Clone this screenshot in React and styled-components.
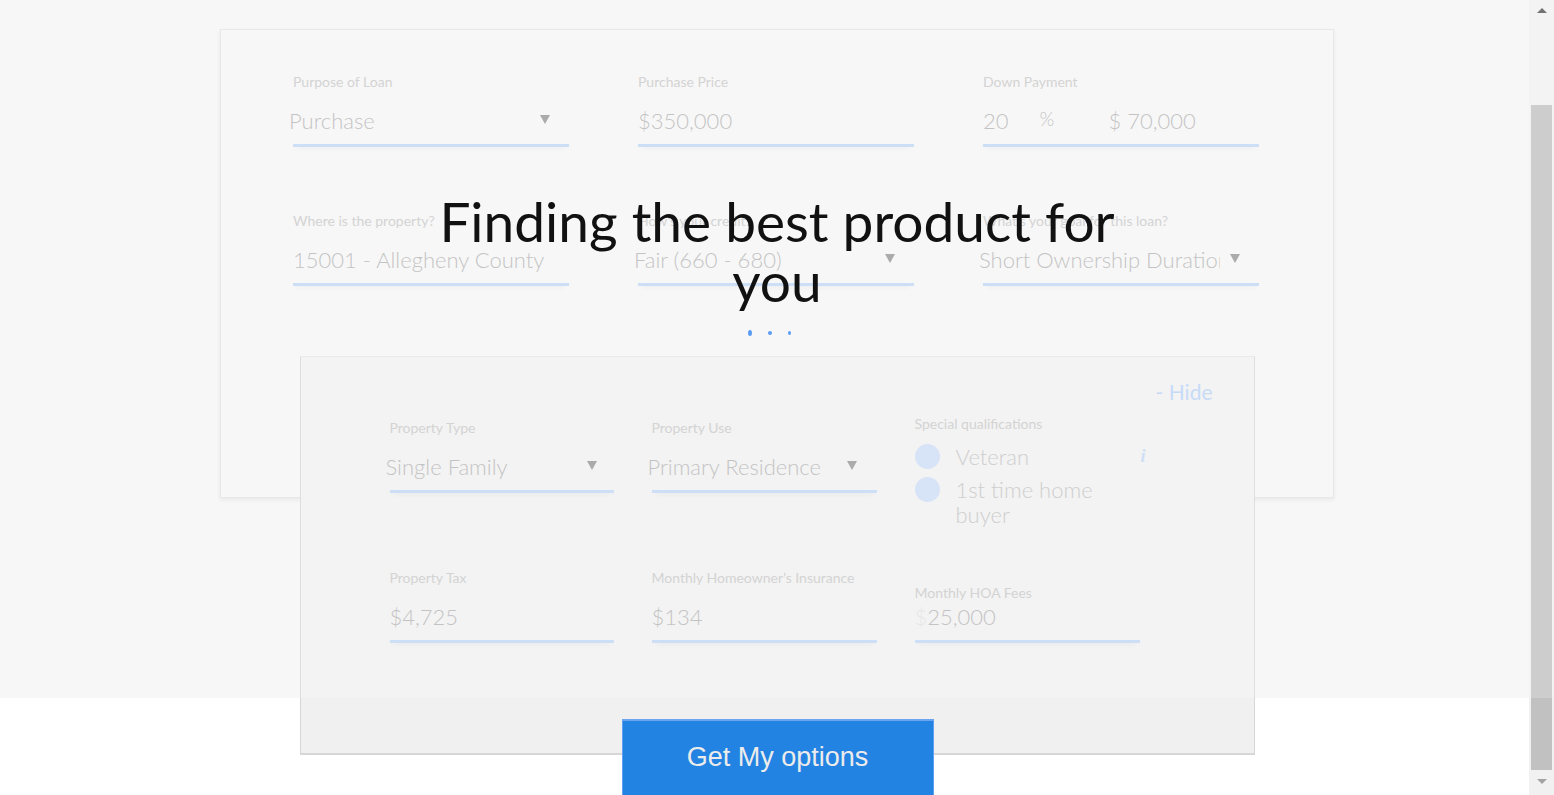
import styled, { createGlobalStyle } from 'styled-components';

const GlobalStyle = createGlobalStyle`
  html, body {
    margin: 0;
    padding: 0;
    background: #ffffff;
    overflow: hidden;
    font-family: Lato, "Open Sans", sans-serif;
  }
  * {
    box-sizing: border-box;
  }
`;

const cardRows = [
  [
    { label: 'Purpose of Loan', value: 'Purchase', select: true },
    { label: 'Purchase Price', value: '$350,000' },
    { label: 'Down Payment', down: true },
  ],
  [
    { label: 'Where is the property?', value: '15001 - Allegheny County' },
    { label: 'How\u2019s your credit?', value: 'Fair (660 - 680)', select: true },
    { label: 'What\u2019s your goal for this loan?', value: 'Short Ownership Duration', select: true },
  ],
];

const Field = ({ label, value, select, down }) => (
  <FieldBox>
    <Label>{label}</Label>
    <Control>
      {down ? (
        <>
          <Value $grow={false}>20</Value>
          <Percent>%</Percent>
          <Value>$ 70,000</Value>
        </>
      ) : (
        <Value $shift={select}>{value}</Value>
      )}
      {select && <Arrow />}
    </Control>
  </FieldBox>
);

const App = () => {
  return (
    <>
      <GlobalStyle />
      <Page>
        <Hero>
          <Card>
            {cardRows.map((row, i) => (
              <CardRow key={i}>
                {row.map(f => (
                  <Field key={f.label} {...f} />
                ))}
              </CardRow>
            ))}
          </Card>

          <Panel>
            <HideRow>
              <HideLink>- Hide</HideLink>
            </HideRow>
            <PanelGrid>
              <FieldBox $nudge>
                <Label>Property Type</Label>
                <Control>
                  <Value $shift>Single Family</Value>
                  <Arrow $gap={17} />
                </Control>
              </FieldBox>
              <FieldBox $nudge>
                <Label>Property Use</Label>
                <Control>
                  <Value $shift>Primary Residence</Value>
                  <Arrow $gap={20} />
                </Control>
              </FieldBox>
              <FieldBox>
                <Label>Special qualifications</Label>
                <Checks>
                  <CheckRow>
                    <Circle />
                    <CheckText>Veteran</CheckText>
                    <Info>i</Info>
                  </CheckRow>
                  <CheckRow>
                    <Circle />
                    <CheckText>1st time home buyer</CheckText>
                  </CheckRow>
                </Checks>
              </FieldBox>

              <FieldBox>
                <Label>Property Tax</Label>
                <Control>
                  <Value>$4,725</Value>
                </Control>
              </FieldBox>
              <FieldBox>
                <Label>Monthly Homeowner’s Insurance</Label>
                <Control>
                  <Value>$134</Value>
                </Control>
              </FieldBox>
              <FieldBox>
                <Label $drop>Monthly HOA Fees</Label>
                <Control>
                  <Value>
                    <Faint>$</Faint>25,000
                  </Value>
                </Control>
              </FieldBox>
            </PanelGrid>
          </Panel>

          <Overlay>
            <Heading>Finding the best product for you</Heading>
            <Dots>
              <Dot $w={4} $h={6} />
              <Dot $w={4} $h={4} />
              <Dot $w={3} $h={4} />
            </Dots>
          </Overlay>
        </Hero>

        <Footer>
          <SubmitButton>Get My options</SubmitButton>
        </Footer>
      </Page>

      <Scrollbar>
        <ScrollArrow $up />
        <Thumb />
        <ScrollArrow />
      </Scrollbar>
    </>
  );
};

// Styled Components
const Page = styled.div`
  width: 1554px;
  height: 795px;
  overflow: hidden;
`;

const Hero = styled.section`
  position: relative;
  height: 698px;
  padding-top: 29px;
  background: #f5f5f5;
`;

const Card = styled.div`
  width: 1114px;
  height: 469px;
  margin: 0 auto;
  padding: 43px 74px 0 72px;
  background: #f5f5f5;
  border: 1px solid #e3e3e3;
  box-shadow: 0 2px 4px rgba(0, 0, 0, 0.07);
  display: flex;
  flex-direction: column;
  gap: 65px;
`;

const CardRow = styled.div`
  display: grid;
  grid-template-columns: repeat(3, 276px);
  column-gap: 69px;
`;

const FieldBox = styled.div`
  display: flex;
  flex-direction: column;
  margin-top: ${p => (p.$nudge ? '4px' : '0')};
`;

const Label = styled.div`
  font-size: 14px;
  line-height: 18px;
  color: #c9c9c9;
  white-space: nowrap;
  margin-top: ${p => (p.$drop ? '15px' : '0')};
  margin-bottom: ${p => (p.$drop ? '-15px' : '0')};
`;

const Control = styled.div`
  display: flex;
  align-items: center;
  height: 51px;
  margin-top: 5px;
  border-bottom: 3px solid #c0d7f6;
  box-shadow: 0 5px 6px -4px rgba(0, 0, 0, 0.05);
  font-size: 22px;
  font-weight: 300;
  color: #b5b5b5;
`;

const Value = styled.span`
  flex: ${p => (p.$grow === false ? '0 0 auto' : '1 1 auto')};
  min-width: 0;
  margin-left: ${p => (p.$shift ? '-4px' : '0')};
  overflow: hidden;
  white-space: nowrap;
`;

const Percent = styled.span`
  margin: -3px 0 0 31px;
  width: 69px;
  font-size: 19px;
`;

const Faint = styled.span`
  color: #e2e2e2;
`;

const Arrow = styled.span`
  flex: 0 0 auto;
  width: 0;
  height: 0;
  margin: 0 ${p => p.$gap || 19}px 0 10px;
  border-left: 5px solid transparent;
  border-right: 5px solid transparent;
  border-top: 9px solid #969696;
  transform: translateY(-1px);
`;

const Panel = styled.div`
  position: relative;
  z-index: 1;
  width: 955px;
  height: 399px;
  margin: -142px auto 0;
  padding: 22px 41px 0 89px;
  background: #f0f0f0;
  border: 1px solid #d6d6d6;
  border-top-color: #e6e6e6;
  border-bottom: 2px solid #d6d6d6;
`;

const HideRow = styled.div`
  display: flex;
  justify-content: flex-end;
  height: 26px;
`;

const HideLink = styled.span`
  font-size: 21px;
  line-height: 26px;
  color: #bad3f6;
  cursor: pointer;
`;

const PanelGrid = styled.div`
  display: grid;
  grid-template-columns: 224px 225px 225px;
  column-gap: 38px;
  row-gap: 42px;
  align-items: start;
  margin-top: 10px;
`;

const Checks = styled.div`
  display: flex;
  flex-direction: column;
  gap: 8px;
  margin-top: 11px;
`;

const CheckRow = styled.div`
  display: flex;
  align-items: flex-start;
  gap: 16px;
`;

const Circle = styled.span`
  flex: 0 0 auto;
  width: 25px;
  height: 25px;
  border-radius: 50%;
  background: #cedcf5;
`;

const CheckText = styled.span`
  flex: 1 1 auto;
  max-width: 150px;
  font-size: 22px;
  font-weight: 300;
  line-height: 25px;
  color: #c3c3c3;
`;

const Info = styled.span`
  margin: 0 -6px 0 auto;
  font-family: "Liberation Serif", serif;
  font-style: italic;
  font-weight: bold;
  font-size: 18px;
  line-height: 25px;
  color: #c3d8f6;
`;

const Overlay = styled.div`
  position: absolute;
  inset: 0;
  z-index: 5;
  background: rgba(255, 255, 255, 0.2);
  display: flex;
  flex-direction: column;
  align-items: center;
  padding-top: 191px;
`;

const Heading = styled.h1`
  margin: 0;
  max-width: 720px;
  font-family: Lato, sans-serif;
  font-weight: 400;
  font-size: 55px;
  line-height: 60px;
  color: #111111;
  text-align: center;
`;

const Dots = styled.div`
  display: flex;
  align-items: center;
  gap: 16px;
  margin: 19px 16px 0 0;
`;

const Dot = styled.span`
  width: ${p => p.$w}px;
  height: ${p => p.$h}px;
  border-radius: 50%;
  background: #5a9bf4;
`;

const Footer = styled.div`
  position: relative;
  z-index: 2;
  display: flex;
  justify-content: center;
  padding-top: 21px;
`;

const SubmitButton = styled.button`
  width: 312px;
  height: 92px;
  padding: 0 0 16px;
  margin-left: 1px;
  background: #2383e2;
  border: 1px solid #5e9fee;
  border-top: 2px solid #6aa6f0;
  font-family: "Liberation Sans", Arial, sans-serif;
  font-size: 27px;
  color: #ececec;
  cursor: pointer;
`;

const Scrollbar = styled.div`
  position: fixed;
  top: 0;
  right: 0;
  width: 25px;
  height: 795px;
  background: #f1f1f1;
  display: flex;
  flex-direction: column;
  align-items: center;
  padding: 8px 0 8px;
`;

const ScrollArrow = styled.span`
  width: 0;
  height: 0;
  border-left: 5px solid transparent;
  border-right: 5px solid transparent;
  ${p =>
    p.$up
      ? 'border-bottom: 5px solid #505050; margin-bottom: 92px;'
      : 'border-top: 5px solid #a3a3a3; margin-top: 9px;'}
`;

const Thumb = styled.div`
  width: 21px;
  height: 665px;
  margin-left: -1px;
  background: #c1c1c1;
`;

export default App;
